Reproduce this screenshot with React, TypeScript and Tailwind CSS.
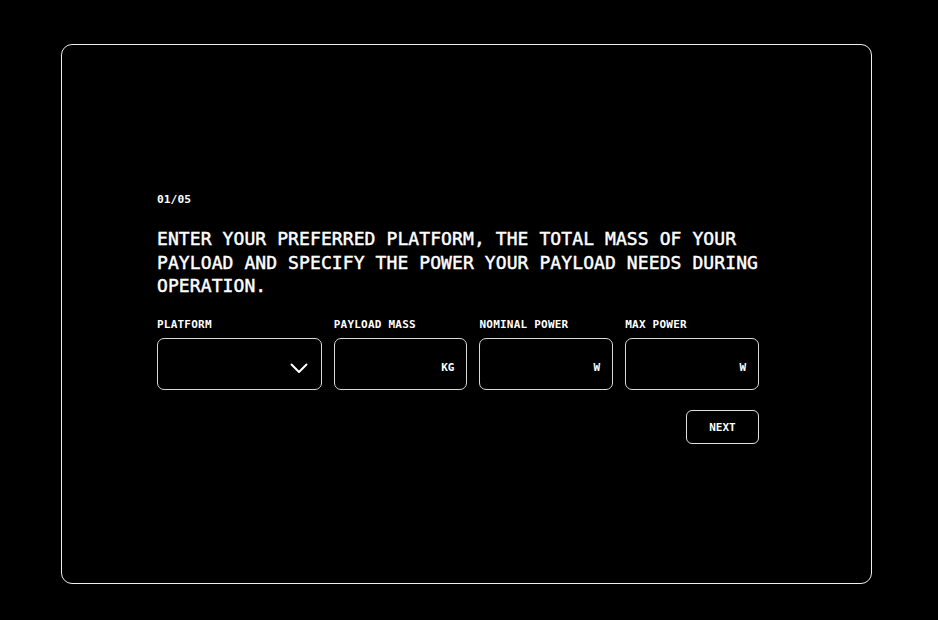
import React from "react";

const mono = { fontFamily: '"DejaVu Sans Mono", "Liberation Mono", monospace' };

function Field({ label, width, unit, chevron }: { label: string; width: string; unit?: string; chevron?: boolean }) {
  return (
    <div className={`flex flex-col ${width}`}>
      <div className="text-[11px] leading-4 font-semibold tracking-[0.02em] text-white mb-[5px]">{label}</div>
      <div className="h-[52px] rounded-[7px] border border-[#d9d9d9] flex items-center justify-end pr-[12px]">
        {chevron ? (
          <svg width="18" height="11" viewBox="0 0 18 11" className="mr-[1px] mt-[9px]">
            <path d="M1.5 1.5 L9 9 L16.5 1.5" fill="none" stroke="white" strokeWidth="2" strokeLinecap="round" strokeLinejoin="round" />
          </svg>
        ) : (
          <span className="text-[11px] font-semibold text-white mt-[10px]">{unit}</span>
        )}
      </div>
    </div>
  );
}

export default function App() {
  return (
    <div className="w-[938px] h-[620px] bg-black overflow-hidden" style={mono}>
      <div className="ml-[61px] mt-[44px] w-[811px] h-[540px] rounded-[11px] border border-[#eeeeee] pl-[95px] pt-[147px]">
        <div className="w-[602px] flex flex-col">
          <div className="text-[11.3px] leading-4 text-white font-semibold">01/05</div>
          <div className="mt-[19px] text-[18px] leading-[23.5px] text-white tracking-[0.005em] [-webkit-text-stroke:0.45px_white]">
            ENTER YOUR PREFERRED PLATFORM, THE TOTAL MASS OF YOUR PAYLOAD AND SPECIFY THE POWER YOUR PAYLOAD NEEDS DURING OPERATION.
          </div>
          <div className="mt-[19px] flex gap-[12px]">
            <Field label="PLATFORM" width="w-[165px]" chevron />
            <Field label="PAYLOAD MASS" width="w-[134px]" unit="KG" />
            <Field label="NOMINAL POWER" width="w-[134px]" unit="W" />
            <Field label="MAX POWER" width="w-[134px]" unit="W" />
          </div>
          <div className="mt-[20px] flex justify-end">
            <button className="w-[73px] h-[34px] rounded-[6px] border border-[#e0e0e0] text-white text-[11px] font-bold pt-[3px]" style={mono}>
              NEXT
            </button>
          </div>
        </div>
      </div>
    </div>
  );
}
